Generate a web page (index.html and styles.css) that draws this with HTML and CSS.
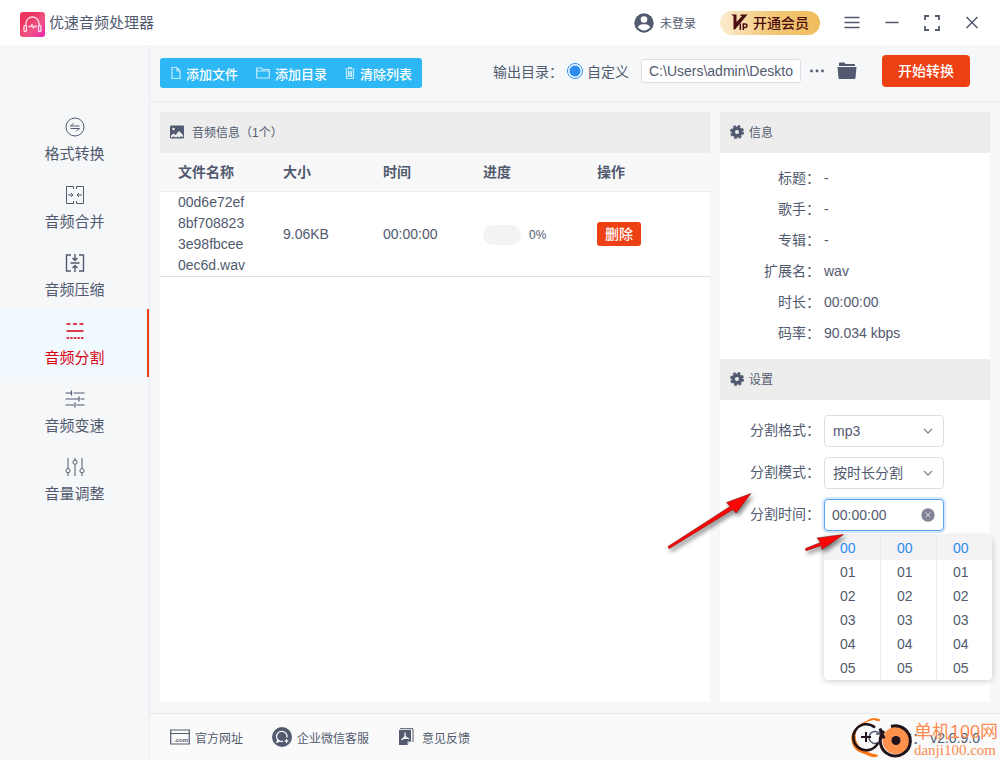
FILE: index.html
```html
<!DOCTYPE html>
<html lang="zh-CN">
<head>
<meta charset="utf-8">
<meta name="viewport" content="width=device-width, initial-scale=1">
<title>优速音频处理器</title>
<link rel="stylesheet" href="styles.css">
</head>
<body>
<div class="app">
  <header class="titlebar">
    <div class="brand">
      <svg class="brand-logo" width="25" height="25" viewBox="0 0 25 25" aria-hidden="true">
        <defs><linearGradient id="logoFill" x1="0" y1="0" x2="1" y2="1"><stop offset="0.3" stop-color="#ec3560"/><stop offset="0.6" stop-color="#f05585"/><stop offset="1" stop-color="#e822b0"/></linearGradient></defs>
        <rect width="25" height="25" rx="3" fill="url(#logoFill)"/>
        <g fill="none" stroke="#ffe0e8" stroke-width="1.3" stroke-linecap="round" stroke-linejoin="round"><path d="M6 13V11.500a6.500 6.500 0 0 1 13 0V13"/><rect x="4" y="13.500" width="2.500" height="6" rx="1"/><rect x="18.500" y="13.500" width="2.500" height="6" rx="1"/><path d="M9 14.500h2l1-2 1.300 3.500 1-1.500h2"/></g>
      </svg>
      <span class="brand-name">优速音频处理器</span>
    </div>
    <div class="title-actions">
      <button class="login" type="button">
        <svg width="20" height="20" viewBox="0 0 20 20" aria-hidden="true"><circle cx="10" cy="10" r="9.700" fill="#515a6e"/><circle cx="10" cy="6.500" r="3.300" fill="#fff"/><path d="M3.800 14.200c1-2.500 3.700-3 6.200-3s5.200.5 6.200 3c-1.400 2-3.800 3.200-6.200 3.200s-4.800-1.200-6.200-3.200z" fill="#fff"/></svg>
        <span>未登录</span>
      </button>
      <button class="vip" type="button">
        <svg width="19" height="18" viewBox="0 0 19 18" aria-hidden="true"><path d="M1 1.500h5.500v7.500L12 3l-2-.3L11 1.500h6.500L5 16.500H3.500V3z" fill="#4a0c10"/><path d="M10.300 10.500V17M13.300 17v-6h1.900a1.700 1.700 0 0 1 0 3.500h-1.900" fill="none" stroke="#4a0c10" stroke-width="1.500"/></svg>
        <span>开通会员</span>
      </button>
      <button class="win" type="button" aria-label="菜单"><svg width="16" height="16" viewBox="0 0 16 16"><path d="M.5 2.500h15M.5 7.500h15M.5 12.500h15"/></svg></button>
      <button class="win" type="button" aria-label="最小化"><svg width="16" height="16" viewBox="0 0 16 16"><path d="M1.500 7.500h13"/></svg></button>
      <button class="win" type="button" aria-label="最大化"><svg width="16" height="16" viewBox="0 0 16 16"><path d="M1 5V1h4M11 1h4v4M15 11v4h-4M5 15H1v-4" stroke-width="1.800"/></svg></button>
      <button class="win" type="button" aria-label="关闭"><svg width="16" height="16" viewBox="0 0 16 16"><path d="M2.500 2l11 11M13.500 2l-11 11"/></svg></button>
    </div>
  </header>

  <div class="workspace">
    <nav class="sidebar">
      <a class="side-item" href="#"><svg viewBox="0 0 20 20"><circle cx="10" cy="10" r="9"/><path d="M14.500 9h-9L8.500 6.500M5.500 11.500h9l-3 2.500"/></svg><span>格式转换</span></a>
      <a class="side-item" href="#"><svg viewBox="0 0 20 20"><path d="M8.500 4V1.500H1.500v17h7V16M11.500 4V1.500h7v17h-7V16M3 10h5M6 8l2 2-2 2M17 10h-5M14 8l-2 2 2 2"/></svg><span>音频合并</span></a>
      <a class="side-item" href="#"><svg viewBox="0 0 20 20"><path d="M6 2H1.500v16H6M14 2h4.500v16H14M5.500 10h9M10 1v6M7.500 5L10 7.500 12.500 5M10 19v-6M7.500 15l2.500-2.500 2.500 2.500" stroke-width="1.400"/></svg><span>音频压缩</span></a>
      <a class="side-item active" href="#" aria-current="page"><svg viewBox="0 0 20 20"><path d="M1.500 3h4M8 3h4M14.500 3h4M1.500 10h17" stroke-width="1.400"/><path d="M1.500 17h17" stroke-width="1.400" stroke-dasharray="2.600 1"/></svg><span>音频分割</span></a>
      <a class="side-item" href="#"><svg viewBox="0 0 20 20"><path d="M.5 4H6M8.500 4h11M6.500 1.500v5M.5 10H13.500M15.500 10h4M14 7.500v5M.5 16H9M11.500 16h8M10 13.500v5" stroke-width="1.200"/></svg><span>音频变速</span></a>
      <a class="side-item" href="#"><svg viewBox="0 0 20 20"><path d="M3 1v10.500M3 16v3M10 1v2M10 7.500V19M17 1v10.500M17 16v3"/><circle cx="3" cy="13.700" r="2.100"/><circle cx="10" cy="5.200" r="2.100"/><circle cx="17" cy="13.700" r="2.100"/></svg><span>音量调整</span></a>
    </nav>

    <main class="main">
      <div class="toolbar">
        <div class="file-actions">
          <button type="button"><svg width="10" height="14" viewBox="0 0 10 14"><path d="M1 1.500h5L9 5v7.500H1zM6 1.500V5h3"/></svg>添加文件</button>
          <button type="button"><svg width="14" height="14" viewBox="0 0 14 14"><path d="M.7 12V2h4.500l1.500 1.500h6.600V12zM.7 5h12.600"/></svg>添加目录</button>
          <button type="button"><svg width="10" height="14" viewBox="0 0 10 14"><path d="M0 3h10M3.500 3V1.500h3V3M1.500 4v8.500h7V4M3.500 5v6M5 5v6M6.500 5v6"/></svg>清除列表</button>
        </div>
        <div class="output">
          <span>输出目录：</span>
          <label class="custom"><input type="radio" name="output" checked><span>自定义</span></label>
          <input class="path" type="text" value="C:\Users\admin\Desktop" aria-label="输出目录">
          <button class="plain more" type="button" aria-label="更多"><svg width="16" height="6" viewBox="0 0 16 6"><circle cx="2.500" cy="3" r="1.400"/><circle cx="8" cy="3" r="1.400"/><circle cx="13.500" cy="3" r="1.400"/></svg></button>
          <button class="plain" type="button" aria-label="打开目录"><svg width="20" height="18" viewBox="0 0 20 18"><path d="M2 3V1.500Q2 .5 3 .5h4.500l1 1.500H17q1 0 1 1v1H2zM.5 5h19l-1 11q-.1 1-1 1h-15q-.9 0-1-1z"/></svg></button>
          <button class="start" type="button">开始转换</button>
        </div>
      </div>

      <div class="content">
        <section class="panel files">
          <h2 class="panel-title audio-title"><svg width="14" height="14" viewBox="0 0 14 14"><rect y=".5" width="14" height="13" rx="1" fill="#515a6e"/><circle cx="3.500" cy="4" r="1.300" fill="#ededed"/><path d="M1 12.500v-2l2.500-2L5.500 10l3.500-4 4 4v2.500l-2-1.500-1.500 1.500-2-1-1.500 1-2-1z" fill="#ededed"/></svg>音频信息（1个）</h2>
          <table class="file-table">
            <colgroup><col class="c-name"><col class="c-size"><col class="c-time"><col class="c-progress"><col></colgroup>
            <thead><tr><th>文件名称</th><th>大小</th><th>时间</th><th>进度</th><th>操作</th></tr></thead>
            <tbody><tr>
              <td class="file-name">00d6e72ef8bf7088233e98fbcee0ec6d.wav</td>
              <td>9.06KB</td>
              <td>00:00:00</td>
              <td><div class="progress"><span class="bar"></span><span>0%</span></div></td>
              <td><button class="delete" type="button">删除</button></td>
            </tr></tbody>
          </table>
        </section>

        <aside class="panel details">
          <h2 class="panel-title"><svg width="14" height="14" viewBox="0 0 14 14"><circle cx="7" cy="7" r="3.800" fill="none" stroke="#515a6e" stroke-width="3.600"/><circle cx="7" cy="7" r="6" fill="none" stroke="#515a6e" stroke-width="2" stroke-dasharray="2.700 2.012"/></svg>信息</h2>
          <dl class="info">
            <dt>标题：</dt><dd>-</dd>
            <dt>歌手：</dt><dd>-</dd>
            <dt>专辑：</dt><dd>-</dd>
            <dt>扩展名：</dt><dd>wav</dd>
            <dt>时长：</dt><dd>00:00:00</dd>
            <dt>码率：</dt><dd>90.034 kbps</dd>
          </dl>
          <h2 class="panel-title"><svg width="14" height="14" viewBox="0 0 14 14"><circle cx="7" cy="7" r="3.800" fill="none" stroke="#515a6e" stroke-width="3.600"/><circle cx="7" cy="7" r="6" fill="none" stroke="#515a6e" stroke-width="2" stroke-dasharray="2.700 2.012"/></svg>设置</h2>
          <form class="settings">
            <label for="format">分割格式：</label>
            <div class="field">
              <select id="format"><option>mp3</option><option>wav</option></select>
              <svg class="field-icon" viewBox="0 0 14 14"><path d="M3 5l4 4 4-4"/></svg>
            </div>
            <label for="mode">分割模式：</label>
            <div class="field">
              <select id="mode"><option>按时长分割</option></select>
              <svg class="field-icon" viewBox="0 0 14 14"><path d="M3 5l4 4 4-4"/></svg>
            </div>
            <label for="time">分割时间：</label>
            <div class="field">
              <input id="time" class="time" type="text" value="00:00:00">
              <svg class="field-icon" viewBox="0 0 14 14"><circle cx="7" cy="7" r="6.700" fill="#808695" stroke="none"/><path d="M4.500 4.500l5 5M9.500 4.500l-5 5" stroke="#d5d8df" stroke-width="1"/></svg>
              <div class="picker">
                <ul><li class="on">00</li><li>01</li><li>02</li><li>03</li><li>04</li><li>05</li></ul>
                <ul><li class="on">00</li><li>01</li><li>02</li><li>03</li><li>04</li><li>05</li></ul>
                <ul><li class="on">00</li><li>01</li><li>02</li><li>03</li><li>04</li><li>05</li></ul>
              </div>
            </div>
            <svg class="arrows" width="200" height="80" viewBox="660 480 200 80" aria-hidden="true">
              <g fill="#fb0505" stroke="#7d1515" stroke-width="0.600"><path d="M668 546.500L730 506.500 726.500 502.500 751 493.500 736 513 733 509.500 669 548.800z"/><path d="M805.500 548.500L820.500 542.500 817 538 843.500 534.500 822 549.500 821.500 545.500 806 550.800z"/></g>
            </svg>
          </form>
        </aside>
      </div>

      <footer class="footer">
        <a href="#"><svg width="20" height="16" viewBox="0 0 20 16"><path d="M.7 1h18.600v14H.7zM.7 4.500h18.600" fill="none" stroke="#515a6e" stroke-width="1.200"/><text x="4" y="13">.com</text></svg>官方网址</a>
        <a href="#"><svg width="20" height="20" viewBox="0 0 20 20"><circle cx="10" cy="10" r="10" fill="#515a6e"/><path d="M15 10.500A5.300 5 0 1 0 11 14.300M6 12.500L5 15.200l3-1.200" fill="none" stroke="#fff" stroke-width="1.300"/><path d="M14.500 11.500l.8 1.700 1.700.8-1.700.8-.8 1.700-.8-1.700-1.700-.8 1.700-.8z" fill="#fff"/></svg>企业微信客服</a>
        <a href="#" class="feedback"><svg width="16" height="18" viewBox="0 0 16 18"><path d="M1 2h12v11l-4 4H1z" fill="#515a6e"/><path d="M2 .7h13V14M13 13.500H9.500V17" fill="none" stroke="#515a6e"/><path d="M9.500 17v-3.500H13z" fill="#d6d9df"/><path d="M7 4.500v4M7 8.500L3.500 12M7 8.500l4 2.500M5 10.500h5" fill="none" stroke="#fff" stroke-width="1.200"/></svg>意见反馈</a>
        <div class="version"><svg width="16" height="16" viewBox="0 0 16 16"><path d="M12 4a6 6 0 1 0 2 5M13 1v4H9" fill="none" stroke="#515a6e" stroke-width="1.500"/></svg><span>版本： v2.0.9.0</span></div>
        <div class="watermark">
          <svg width="64" height="44" viewBox="850 717 64 44" aria-hidden="true">
            <path d="M882 721q-7-3-12 .5l-6 4q-12 6-10 16 1 8 7 11l13 5q4 1 6-1-7-1-14-5-9-5-9-15 1-9 9-13 7-3 10-3 5 2 6 .5z" fill="#fa7814" stroke="#fa7814"/>
            <path d="M877 728.500A13 13 0 1 0 880 744" fill="none" stroke="#20141a" stroke-width="2.600"/>
            <path d="M868 733v10M863 738h10" stroke="#20141a" stroke-width="2"/>
            <circle cx="898" cy="741.500" r="13.500" fill="#ff914d"/>
            <path d="M886 732a15 15 0 1 0 7-4.500M882 729.500l4 10" fill="none" stroke="#20141a" stroke-width="3"/>
            <circle cx="898" cy="741.500" r="4.500" fill="#20141a"/>
          </svg>
          <div class="watermark-text"><span class="wm-name">单机100网</span><span class="wm-url">danji100.com</span></div>
        </div>
      </footer>
    </main>
  </div>
</div>
</body>
</html>
```
FILE: styles.css
```css
* { box-sizing: border-box; }
body {
  margin: 0;
  font-family: "Liberation Sans", "Noto Sans CJK SC", sans-serif;
  font-size: 14px;
  color: #515a6e;
  background: #f5f7f9;
}
button, input, select { font: inherit; color: inherit; }
button { border: 0; padding: 0; background: none; cursor: pointer; }
a { color: inherit; text-decoration: none; }
svg { display: block; flex: none; }

.app { min-height: 100vh; display: flex; flex-direction: column; }

.titlebar {
  height: 45px;
  padding: 0 20px;
  display: flex;
  align-items: center;
  justify-content: space-between;
  background: #fff;
}
.brand { display: flex; align-items: center; gap: 4px; padding-top: 3px; }
.brand-name { font-size: 15px; line-height: 20px; padding-bottom: 2px; }
.title-actions { display: flex; align-items: center; }
.login { display: flex; align-items: center; gap: 6px; font-size: 12px; margin-right: 24px; }
.vip {
  display: flex;
  align-items: center;
  gap: 4px;
  height: 24px;
  width: 100px;
  padding: 0 0 1px 10px;
  margin-right: 24px;
  border-radius: 12px;
  background: linear-gradient(90deg, #fcecd0, #f2c878 50%, #f0bc5c);
  color: #4a0c10;
  font-weight: 500;
}
.win + .win { margin-left: 24px; }
.win svg { fill: none; stroke: #515a6e; stroke-width: 1.5; }

.workspace { flex: 1; display: flex; }
.sidebar { width: 150px; flex: none; padding-top: 60px; border-right: 1px solid #e9ebee; }
.side-item {
  height: 68px;
  padding-top: 12px;
  display: flex;
  flex-direction: column;
  align-items: center;
  gap: 6px;
  font-size: 15px;
  line-height: 22px;
}
.side-item svg { width: 20px; height: 20px; fill: none; stroke: currentColor; stroke-width: 1; }
.side-item.active { color: #d9000f; background: #f0faff; box-shadow: inset -2px 0 #ed4014; }

.main { flex: 1; min-width: 0; display: flex; flex-direction: column; }
.toolbar {
  height: 57px;
  padding: 0 30px 4px 10px;
  display: flex;
  align-items: center;
  justify-content: space-between;
  border-bottom: 1px solid #e8eaec;
}
.file-actions {
  height: 30px;
  margin-top: 4px;
  padding: 0 10px 0 11px;
  display: flex;
  gap: 18px;
  border-radius: 3px;
  background: #2db7f5;
}
.file-actions button { display: flex; align-items: center; gap: 5px; color: #fff; font-size: 13px; font-weight: 500; }
.file-actions svg { fill: none; stroke: #c5ecff; stroke-width: 1.2; }
.output { display: flex; align-items: center; }
.custom { display: flex; align-items: center; gap: 4px; margin: 0 12px 0 4px; }
.custom input {
  appearance: none;
  width: 16px;
  height: 16px;
  margin: 0;
  border: 1px solid #2d8cf0;
  border-radius: 50%;
  background: radial-gradient(circle, #2d8cf0 5px, #fff 6px);
}
.path {
  width: 160px;
  height: 24px;
  padding: 0 7px;
  border: 1px solid #dcdee2;
  border-radius: 3px;
  background: #fff;
}
.plain svg { fill: #515a6e; }
.more { margin: 0 12px 0 8px; }
.start {
  width: 88px;
  height: 32px;
  margin-left: 25px;
  padding-bottom: 2px;
  border-radius: 4px;
  background: #ed4014;
  color: #fff;
  font-weight: 500;
}

.content { flex: 1; display: flex; gap: 10px; padding: 10px 10px 11px; }
.panel { background: #fff; }
.files { flex: 1; min-width: 0; }
.details { width: 270px; flex: none; }
.panel-title {
  height: 41px;
  margin: 0;
  padding: 0 10px 2px;
  display: flex;
  align-items: center;
  gap: 5px;
  background: #ededed;
  font-size: 12px;
  font-weight: 400;
}
.audio-title { gap: 8px; }

.file-table { width: 100%; table-layout: fixed; border-collapse: separate; border-spacing: 0; }
.c-name { width: 105px; }
.c-size, .c-time { width: 100px; }
.c-progress { width: 114px; }
.file-table th, .file-table td { padding: 0 18px; text-align: left; line-height: 21px; border-bottom: 1px solid #dcdee2; }
.file-table th { height: 39px; background: #f8f8f9; font-weight: 700; border-color: #e8eaec; }
.file-name { word-break: break-all; }
.progress { display: flex; align-items: center; gap: 8px; font-size: 12px; padding-top: 2px; }
.bar { width: 38px; height: 20px; border-radius: 10px; background: #f3f3f3; }
.delete {
  width: 44px;
  height: 24px;
  border-radius: 3px;
  background: #ed4014;
  color: #fff;
  font-weight: 500;
}

.info { display: grid; grid-template-columns: 100px 1fr; column-gap: 4px; margin: 0; padding: 10px 0; line-height: 31px; }
.info dt { text-align: right; }
.info dd { margin: 0; }
.settings {
  position: relative;
  display: grid;
  grid-template-columns: 100px 120px;
  gap: 10px 4px;
  padding: 15px 0;
}
.settings label { text-align: right; line-height: 30px; }
.field { position: relative; height: 32px; }
.field select, .field input {
  appearance: none;
  width: 100%;
  height: 32px;
  padding: 0 24px 0 8px;
  border: 1px solid #dcdee2;
  border-radius: 4px;
  background: #fff;
}
.field .time { padding-left: 7px; border-color: #57a3f3; box-shadow: 0 0 0 2px rgba(45, 140, 240, 0.2); }
.field-icon {
  position: absolute;
  right: 9px;
  top: 9px;
  width: 14px;
  height: 14px;
  fill: none;
  stroke: #808695;
  stroke-width: 1.3;
  pointer-events: none;
}
.picker {
  position: absolute;
  z-index: 2;
  top: 37px;
  left: 0;
  width: 168px;
  display: grid;
  grid-template-columns: 57px 56px 55px;
  overflow: hidden;
  border-radius: 4px;
  background: #fff;
  box-shadow: 0 1px 6px rgba(0, 0, 0, 0.2);
}
.picker ul { margin: 0; padding: 0; list-style: none; border-right: 1px solid #e8eaec; }
.picker ul:last-child { border-right: 0; }
.picker li { height: 24px; padding-left: 16px; line-height: 24px; }
.picker .on { color: #2d8cf0; background: #f3f3f3; }
.arrows {
  position: absolute;
  z-index: 3;
  left: -60px;
  top: 80px;
  pointer-events: none;
  filter: drop-shadow(2px 3px 2px rgba(0, 0, 0, 0.5));
}

.footer {
  position: relative;
  height: 47px;
  padding: 0 20px;
  display: flex;
  align-items: center;
  gap: 29px;
  border-top: 1px solid #e8eaec;
  background: #fafafa;
  font-size: 12px;
}
.footer a { display: flex; align-items: center; gap: 5px; }
.footer .feedback { gap: 8px; }
.footer text { font-family: "Liberation Sans", sans-serif; font-size: 6px; font-weight: 700; fill: #515a6e; }
.version { margin-left: auto; display: flex; align-items: center; gap: 1px; font-size: 14px; }
.watermark { position: absolute; right: 2px; bottom: 0; display: flex; align-items: center; gap: 2px; }
.watermark-text { display: flex; flex-direction: column; padding-top: 4px; color: #fb8c50; }
.wm-name { font-size: 18px; line-height: 20px; }
.wm-url { font-size: 15px; line-height: 16px; font-family: "Liberation Serif", serif; }
```
